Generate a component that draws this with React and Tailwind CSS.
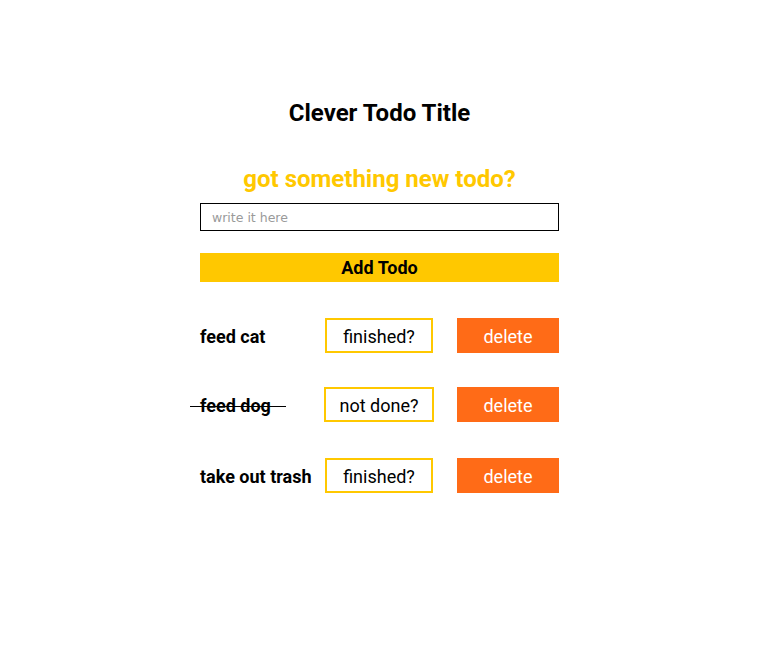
import React, { useState } from "react";

const initialTodos = [
  { id: 1, text: "feed cat", done: false },
  { id: 2, text: "feed dog", done: true },
  { id: 3, text: "take out trash", done: false },
];

const App = () => {
  const [todos, setTodos] = useState(initialTodos);
  const [value, setValue] = useState("");

  const addTodo = () => {
    if (!value.trim()) return;
    setTodos([...todos, { id: Date.now(), text: value, done: false }]);
    setValue("");
  };

  const toggle = (id) =>
    setTodos(todos.map((t) => (t.id === id ? { ...t, done: !t.done } : t)));

  const remove = (id) => setTodos(todos.filter((t) => t.id !== id));

  return (
    <div
      className="w-[761px] h-[672px] bg-white flex justify-center pr-[2px]"
      style={{ fontFamily: "Roboto, 'Liberation Sans', sans-serif" }}
    >
      <div className="w-[359px] pt-[98px]">
        <h1 className="text-[24px] leading-[30px] font-bold text-black text-center">
          Clever Todo Title
        </h1>
        <h2 className="mt-[36px] text-[24px] leading-[30px] font-bold text-[#ffc800] text-center">
          got something new todo?
        </h2>
        <input
          value={value}
          onChange={(e) => setValue(e.target.value)}
          placeholder="write it here"
          className="mt-[9px] block w-full h-[28px] border border-black px-[11px] text-[12.5px] outline-none placeholder:text-[#9a9a9a]"
          style={{ fontFamily: "'DejaVu Sans', sans-serif" }}
        />
        <button
          onClick={addTodo}
          className="mt-[22px] block w-full h-[29px] bg-[#ffc800] text-[18px] font-bold text-black leading-[29px]"
        >
          Add Todo
        </button>

        <div className="mt-[36px] flex flex-col">
          {todos.map((todo, i) => (
            <div
              key={todo.id}
              className={`flex items-center h-[35px] ${i === 0 ? "" : i === 1 ? "mt-[34px]" : "mt-[36px]"}`}
            >
              <div className="w-[124px] relative pt-[2px]">
                <span className="text-[18px] font-bold text-black whitespace-nowrap">
                  {todo.text}
                </span>
                {todo.done && (
                  <span className="absolute left-[-10px] top-[16px] w-[96px] h-[1px] bg-black" />
                )}
              </div>
              <div className="w-[110px] flex justify-center">
                <button
                  onClick={() => toggle(todo.id)}
                  className={`h-[35px] pt-[2px] border-2 border-[#ffc800] text-[18px] text-black ${todo.done ? "w-[110px]" : "w-[108px]"}`}
                >
                  {todo.done ? "not done?" : "finished?"}
                </button>
              </div>
              <button
                onClick={() => remove(todo.id)}
                className="ml-auto w-[102px] h-[35px] pt-[2px] bg-[#ff6b17] text-white text-[18px]"
              >
                delete
              </button>
            </div>
          ))}
        </div>
      </div>
    </div>
  );
};

export default App;
